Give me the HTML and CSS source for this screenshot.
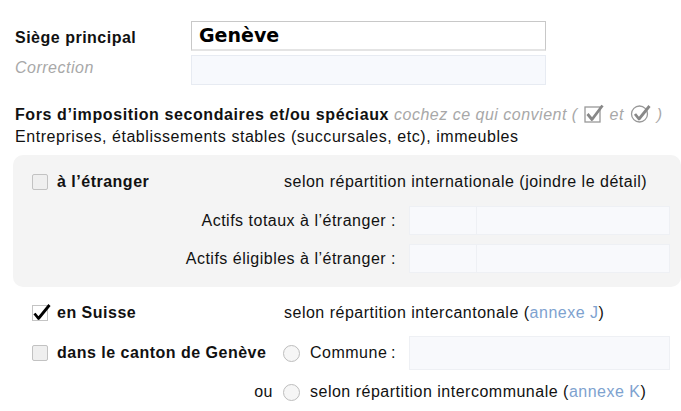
FILE: index.html
```html
<!DOCTYPE html>
<html lang="fr">
<head>
<meta charset="utf-8">
<link rel="stylesheet" href="styles.css">
</head>
<body>
<div class="page">
  <div class="siege">
    <div class="row-top">
      <span class="lbl-bold">Siège principal</span>
      <div class="field-main">Genève</div>
    </div>
    <div class="row-top row-corr">
      <span class="lbl-corr">Correction</span>
      <div class="field-corr"></div>
    </div>
  </div>

  <div class="fors">
    <div class="fors-title"><b>Fors d’imposition secondaires et/ou spéciaux</b> <i class="hint">cochez ce qui convient (
      <svg class="ico" width="20" height="19" viewBox="0 0 20 19"><rect x="1" y="3" width="15" height="15" fill="#fff" stroke="#999" stroke-width="1.3"/><path d="M3.5 10 L8 15.5 L18.5 1.5" fill="none" stroke="#888" stroke-width="2.8" stroke-linejoin="round"/></svg>
      et
      <svg class="ico" width="21" height="19" viewBox="0 0 21 19"><circle cx="9.5" cy="10" r="8" fill="#fff" stroke="#999" stroke-width="1.3"/><path d="M5 10 L9 15 L19.5 2" fill="none" stroke="#888" stroke-width="2.8" stroke-linejoin="round"/></svg>
      )</i></div>
    <div class="fors-sub">Entreprises, établissements stables (succursales, etc), immeubles</div>
  </div>

  <div class="panel">
    <div class="grid">
      <span class="cb"></span>
      <span class="opt">à l’étranger</span>
      <span class="desc">selon répartition internationale (joindre le détail)</span>
    </div>
    <div class="grid frow frow1">
      <span class="flabel">Actifs totaux à l’étranger :</span>
      <div class="field-split"><span class="part-a"></span><span class="part-b"></span></div>
    </div>
    <div class="grid frow">
      <span class="flabel">Actifs éligibles à l’étranger :</span>
      <div class="field-split"><span class="part-a"></span><span class="part-b"></span></div>
    </div>
  </div>

  <div class="lower">
    <div class="grid">
      <svg class="cb-checked" width="19" height="19" viewBox="0 0 19 19"><rect x="0.5" y="2.5" width="15" height="15" fill="#fff" stroke="#c4c4c4"/><path d="M2.5 10.5 L6.5 15.5 L17.5 2" fill="none" stroke="#000" stroke-width="2.8" stroke-linejoin="round"/></svg>
      <span class="opt">en Suisse</span>
      <span class="desc">selon répartition intercantonale (<a class="lnk">annexe J</a>)</span>
    </div>
    <div class="grid row-canton">
      <span class="cb"></span>
      <span class="opt">dans le canton de Genève</span>
      <span class="radio"></span>
      <span class="commune">Commune&#8201;:</span>
      <div class="field-commune"></div>
    </div>
    <div class="grid row-ou">
      <span class="ou">ou</span>
      <span class="radio"></span>
      <span class="desc2">selon répartition intercommunale (<a class="lnk">annexe K</a>)</span>
    </div>
  </div>
</div>
</body>
</html>
```

FILE: styles.css
```css
* { box-sizing: border-box; }
html, body { margin: 0; padding: 0; background: #fff; }
body {
  font-family: "Liberation Sans", Arial, sans-serif;
  font-size: 16px;
  letter-spacing: 0.5px;
  color: #111;
  width: 681px;
  height: 411px;
  overflow: hidden;
}
.page { padding: 21px 0 0 0; }

.siege { padding-left: 15px; }
.row-top { display: flex; align-items: center; }
.lbl-bold, .lbl-corr { width: 176px; }
.lbl-bold { font-weight: bold; position: relative; top: 2px; }
.lbl-corr { font-style: italic; color: #a8a8a8; position: relative; top: -2px; }
.field-main {
  width: 355px;
  height: 30px;
  border: 1px solid #c8c8c8;
  border-bottom: 2px solid #e4e4e4;
  padding-left: 7px;
  font-family: "Comic Sans MS", "DejaVu Sans", sans-serif;
  font-weight: bold;
  font-size: 19px;
  letter-spacing: 0;
  line-height: 27px;
  color: #000;
}
.row-corr { margin-top: 4px; }
.field-corr {
  width: 355px;
  height: 30px;
  background: #f7f9fd;
  border: 1px solid #e7ebf2;
}

.fors { padding-left: 15px; margin-top: 19px; line-height: 22px; }
.fors-title b { font-weight: bold; letter-spacing: 0.6px; }
.hint { color: #a8a8a8; }
.ico { vertical-align: -3px; margin: 0 1px; }
.fors-sub { margin-top: 0; letter-spacing: 0.55px; }

.panel {
  margin: 7px 0 0 13px;
  background: #f4f4f4;
  border-radius: 10px;
  padding: 17px 10px 14px 19px;
}

.grid {
  display: grid;
  grid-template-columns: 25px 226px 27px 99px 261px;
  align-items: center;
  height: 20px;
}
.cb {
  width: 16px;
  height: 16px;
  background: #efefef;
  border: 1px solid #c2c2c2;
  border-radius: 2px;
}
.cb-checked { position: relative; top: -1px; }
.opt { font-weight: bold; white-space: nowrap; }
.desc { grid-column: 3 / 6; padding-left: 1px; white-space: nowrap; }

.frow { height: 29px; margin-top: 9px; }
.frow1 { margin-top: 14px; }
.flabel { grid-column: 1 / 5; text-align: right; padding-right: 13px; white-space: nowrap; }
.field-split {
  grid-column: 5;
  height: 29px;
  display: flex;
  background: #f8f9fc;
  border: 1px solid #eef0f4;
}
.part-a { width: 67px; border-right: 1px solid #eef0f4; }
.part-b { flex: 1; }

.lower { padding-left: 32px; margin-top: 16px; }
.radio {
  width: 17px;
  height: 17px;
  border-radius: 50%;
  background: #f6f6f6;
  border: 1px solid #bdbdbd;
}
.commune { white-space: nowrap; }
.row-canton { height: 34px; margin-top: 13px; }
.field-commune {
  grid-column: 5;
  height: 34px;
  background: #f8f9fc;
  border: 1px solid #eef0f4;
}
.row-ou { margin-top: 12px; }
.ou { grid-column: 1 / 3; text-align: right; padding-right: 10px; }
.desc2 { grid-column: 4 / 6; white-space: nowrap; }
.lnk { color: #7ea2cf; text-decoration: none; }
```
